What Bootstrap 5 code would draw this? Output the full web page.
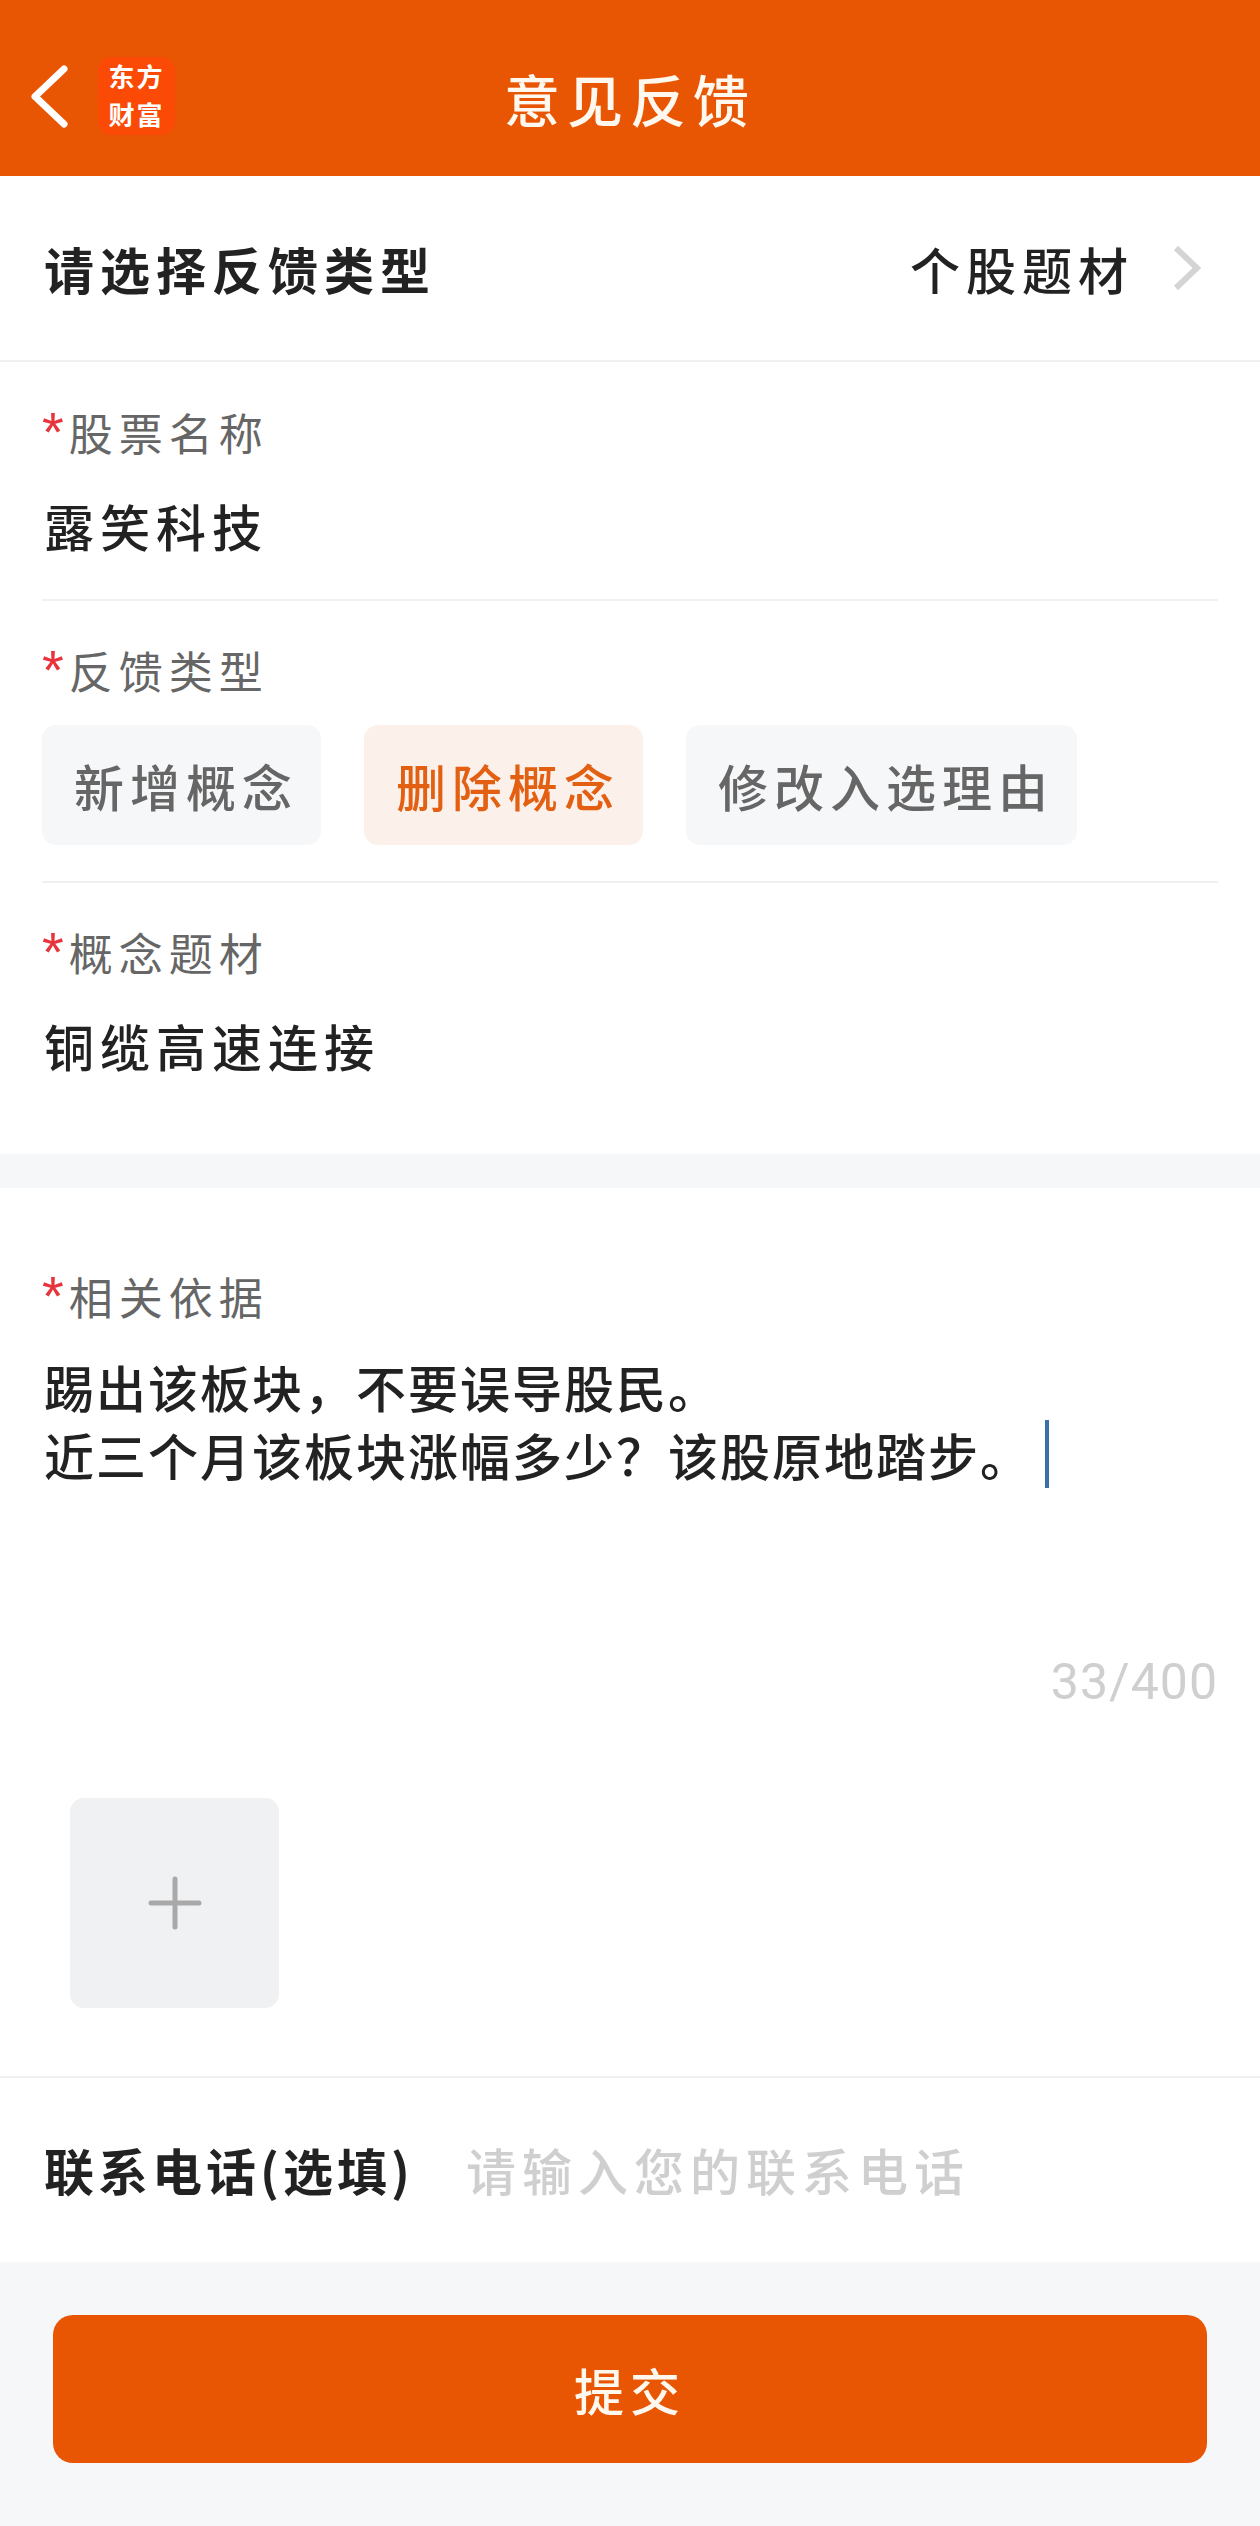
<!DOCTYPE html>
<html lang="zh-Hans">

<head>
  <meta charset="UTF-8">
  <meta name="viewport" content="width=device-width, initial-scale=1.0">
  <title>意见反馈</title>
  <link href="https://cdn.jsdelivr.net/npm/bootstrap@5.3.2/dist/css/bootstrap.min.css" rel="stylesheet">
  <style>
    body {
      font-family: "Noto Sans CJK SC", "Liberation Sans", sans-serif;
      color: #222;
      background: #fff;
    }

    .top-bar {
      height: 176px;
      background: #e85604;
      display: grid;
      grid-template-columns: 1fr auto 1fr;
      align-items: center;
      padding-top: 16px;
      padding-left: 31px;
    }

    .top-title {
      font-size: 56px;
      line-height: 1;
      letter-spacing: 7px;
      color: #fff8ee;
      font-weight: 500;
      margin-left: -31px;
      padding-top: 4px;
    }

    .app-logo {
      width: 77px;
      height: 78px;
      margin-left: 30px;
      background: #fb4a05;
      border-radius: 14px;
      color: #fff;
      font-size: 26px;
      line-height: 38px;
      letter-spacing: 2px;
      font-weight: 700;
      text-align: center;
    }

    .type-row {
      height: 186px;
      padding: 0 59px 0 44px;
      border-bottom: 2px solid #f0f0f2;
    }

    .type-pick {
      gap: 39px;
    }

    .big-text {
      font-size: 50px;
      line-height: 68px;
      letter-spacing: 6px;
      font-weight: 500;
    }

    .field-wrap {
      padding: 0 42px;
    }

    .field-a {
      padding-top: 40px;
      padding-bottom: 40px;
      border-bottom: 2px solid #f0f0f2;
    }

    .field-b {
      padding-top: 39px;
      padding-bottom: 36px;
      border-bottom: 2px solid #f0f0f2;
    }

    .field-c {
      padding-top: 39px;
      height: 271px;
    }

    .field-label {
      font-size: 44px;
      line-height: 60px;
      letter-spacing: 6px;
      color: #666;
    }

    .req-star {
      color: #e8333c;
      font-family: "Liberation Sans", sans-serif;
      font-size: 56px;
      letter-spacing: 0;
      line-height: 60px;
      margin-right: 5px;
    }

    .field-value {
      margin-top: 29px;
      margin-left: 2px;
    }

    .chip-list {
      margin-top: 25px;
      gap: 43px;
    }

    .chip-btn {
      height: 120px;
      padding: 0 23px 0 32px;
      border: 0;
      border-radius: 14px;
      background: #f6f7f9;
      color: #666;
      font-size: 50px;
      font-weight: 500;
      letter-spacing: 6px;
      line-height: 120px;
    }

    .chip-btn.is-on {
      background: #fcf1ea;
      color: #e35f12;
    }

    .gap-band {
      height: 34px;
      background: #f6f7f9;
    }

    .basis-block {
      padding-top: 78px;
      border-bottom: 2px solid #f0f0f2;
    }

    .basis-text {
      margin-top: 26px;
      margin-left: 2px;
      min-height: 300px;
      letter-spacing: 2px;
    }

    .text-caret {
      display: inline-block;
      width: 4px;
      height: 68px;
      margin-left: 13px;
      vertical-align: top;
      background: #3b6fa8;
    }

    .char-count {
      font-family: Roboto, sans-serif;
      font-size: 50px;
      line-height: 60px;
      letter-spacing: 1px;
      color: #cfcfcf;
      text-align: right;
    }

    .add-tile {
      width: 209px;
      height: 210px;
      margin: 86px 0 68px 28px;
      background: #f0f1f3;
      border-radius: 14px;
    }

    .phone-row {
      height: 184px;
      padding-left: 44px;
      padding-bottom: 2px;
    }

    .phone-label {
      width: 422px;
      flex: none;
      font-weight: 700;
      letter-spacing: 4px;
    }

    .phone-input {
      padding: 0;
      border: 0;
      border-radius: 0;
      color: #222;
    }

    .phone-input::placeholder {
      color: #cfcfcf;
    }

    .foot-bar {
      height: 264px;
      padding: 53px 53px 0;
      background: #f6f7f9;
    }

    .submit-btn {
      height: 148px;
      border: 0;
      border-radius: 20px;
      background: #e85604;
      color: #fff8ee;
      font-size: 50px;
      font-weight: 500;
      letter-spacing: 6px;
    }
  </style>
</head>

<body>
  <header class="top-bar">
    <div class="d-flex align-items-center">
      <svg width="37" height="63" viewBox="0 0 37 63" fill="none" stroke="#fff" stroke-width="7" stroke-linecap="round" stroke-linejoin="round">
        <path d="M33 4 L4 31.5 L33 59" />
      </svg>
      <div class="app-logo"><div>东方</div><div>财富</div></div>
    </div>
    <div class="top-title">意见反馈</div>
    <div></div>
  </header>

  <div class="type-row d-flex align-items-center justify-content-between">
    <div class="big-text fw-bold">请选择反馈类型</div>
    <div class="type-pick d-flex align-items-center">
      <span class="big-text">个股题材</span>
      <svg width="28" height="44" viewBox="0 0 28 44" fill="none" stroke="#d4d4d4" stroke-width="6">
        <path d="M3 2 L24 22 L3 42" />
      </svg>
    </div>
  </div>

  <div class="field-wrap">
    <div class="field-a">
      <div class="field-label"><span class="req-star">*</span>股票名称</div>
      <div class="big-text field-value">露笑科技</div>
    </div>
    <div class="field-b">
      <div class="field-label"><span class="req-star">*</span>反馈类型</div>
      <div class="chip-list d-flex">
        <button type="button" class="btn chip-btn">新增概念</button>
        <button type="button" class="btn chip-btn is-on">删除概念</button>
        <button type="button" class="btn chip-btn">修改入选理由</button>
      </div>
    </div>
    <div class="field-c">
      <div class="field-label"><span class="req-star">*</span>概念题材</div>
      <div class="big-text field-value">铜缆高速连接</div>
    </div>
  </div>

  <div class="gap-band"></div>

  <div class="basis-block">
    <div class="field-wrap">
      <div class="field-label"><span class="req-star">*</span>相关依据</div>
      <div class="big-text basis-text">踢出该板块，不要误导股民。<br>近三个月该板块涨幅多少？该股原地踏步。<span class="text-caret"></span></div>
      <div class="char-count">33/400</div>
      <div class="add-tile d-flex align-items-center justify-content-center">
        <svg width="54" height="54" viewBox="0 0 54 54" stroke="#a9a9a9" stroke-width="5" stroke-linecap="round">
          <path d="M3 27 H51 M27 3 V51" />
        </svg>
      </div>
    </div>
  </div>

  <div class="phone-row d-flex align-items-center">
    <div class="big-text phone-label">联系电话(选填)</div>
    <input type="text" class="form-control big-text phone-input" placeholder="请输入您的联系电话">
  </div>

  <div class="foot-bar">
    <button type="button" class="btn submit-btn w-100">提交</button>
  </div>

  <script src="https://cdn.jsdelivr.net/npm/bootstrap@5.3.2/dist/js/bootstrap.bundle.min.js"></script>
</body>

</html>
